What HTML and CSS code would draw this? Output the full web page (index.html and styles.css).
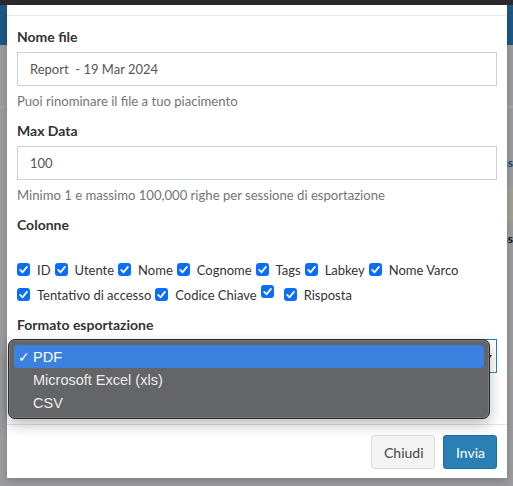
FILE: index.html
```html
<!DOCTYPE html>
<html lang="it">
<head>
<meta charset="utf-8">
<title>Esporta report</title>
<link rel="stylesheet" href="styles.css">
</head>
<body>
  <div class="topbar"></div>
  <div class="appbar"></div>
  <div class="page">
    <div class="page-line"></div>
    <div class="page-row page-row-link"><span>ss</span></div>
    <div class="page-row page-row-warn"></div>
    <div class="page-row page-row-text"><span>ss</span></div>
  </div>

  <div class="backdrop"></div>

  <div class="modal">
    <div class="modal-header"></div>
    <div class="modal-body">
      <label class="field-label">Nome file</label>
      <input class="text-input" type="text" value="Report  - 19 Mar 2024">
      <p class="help">Puoi rinominare il file a tuo piacimento</p>

      <label class="field-label">Max Data</label>
      <input class="text-input" type="text" value="100">
      <p class="help">Minimo 1 e massimo 100,000 righe per sessione di esportazione</p>

      <label class="field-label">Colonne</label>
      <div class="columns">
        <span class="check"><span class="box"><svg viewBox="0 0 13 13"><rect width="13" height="13" rx="3"/><path d="M3.2 6.9 5.6 9.3 9.9 3.9"/></svg></span><span class="check-label">ID</span></span>
        <span class="check"><span class="box"><svg viewBox="0 0 13 13"><rect width="13" height="13" rx="3"/><path d="M3.2 6.9 5.6 9.3 9.9 3.9"/></svg></span><span class="check-label">Utente</span></span>
        <span class="check"><span class="box"><svg viewBox="0 0 13 13"><rect width="13" height="13" rx="3"/><path d="M3.2 6.9 5.6 9.3 9.9 3.9"/></svg></span><span class="check-label">Nome</span></span>
        <span class="check"><span class="box"><svg viewBox="0 0 13 13"><rect width="13" height="13" rx="3"/><path d="M3.2 6.9 5.6 9.3 9.9 3.9"/></svg></span><span class="check-label">Cognome</span></span>
        <span class="check"><span class="box"><svg viewBox="0 0 13 13"><rect width="13" height="13" rx="3"/><path d="M3.2 6.9 5.6 9.3 9.9 3.9"/></svg></span><span class="check-label">Tags</span></span>
        <span class="check"><span class="box"><svg viewBox="0 0 13 13"><rect width="13" height="13" rx="3"/><path d="M3.2 6.9 5.6 9.3 9.9 3.9"/></svg></span><span class="check-label">Labkey</span></span>
        <span class="check"><span class="box"><svg viewBox="0 0 13 13"><rect width="13" height="13" rx="3"/><path d="M3.2 6.9 5.6 9.3 9.9 3.9"/></svg></span><span class="check-label">Nome Varco</span></span>
        <span class="check"><span class="box"><svg viewBox="0 0 13 13"><rect width="13" height="13" rx="3"/><path d="M3.2 6.9 5.6 9.3 9.9 3.9"/></svg></span><span class="check-label">Tentativo di accesso</span></span>
        <span class="check"><span class="box"><svg viewBox="0 0 13 13"><rect width="13" height="13" rx="3"/><path d="M3.2 6.9 5.6 9.3 9.9 3.9"/></svg></span><span class="check-label">Codice Chiave</span></span>
        <span class="check check-bare"><span class="box"><svg viewBox="0 0 13 13"><rect width="13" height="13" rx="3"/><path d="M3.2 6.9 5.6 9.3 9.9 3.9"/></svg></span><span class="check-label"></span></span>
        <span class="check"><span class="box"><svg viewBox="0 0 13 13"><rect width="13" height="13" rx="3"/><path d="M3.2 6.9 5.6 9.3 9.9 3.9"/></svg></span><span class="check-label">Risposta</span></span>
      </div>

      <label class="field-label field-label-format">Formato esportazione</label>
      <div class="select-wrap">
        <div class="select"><span class="caret"></span></div>
        <ul class="menu">
          <li class="menu-item is-active"><span class="tick">✓</span>PDF</li>
          <li class="menu-item">Microsoft Excel (xls)</li>
          <li class="menu-item">CSV</li>
        </ul>
      </div>
    </div>
    <div class="modal-footer">
      <button class="btn btn-default" type="button">Chiudi</button>
      <button class="btn btn-primary" type="button">Invia</button>
    </div>
  </div>
</body>
</html>
```

FILE: styles.css
```css
* {
  box-sizing: border-box;
}

html,
body {
  margin: 0;
}

body {
  position: relative;
  width: 513px;
  height: 486px;
  overflow: hidden;
  background: #f1f2f4;
  font-family: Lato, "Liberation Sans", sans-serif;
}

/* underlying application page */
.topbar {
  position: relative;
  z-index: 2;
  height: 5px;
  background: #2b2b2b;
}

.appbar {
  height: 40px;
  background: #2f87cf;
}

.page {
  display: flex;
  flex-direction: column;
  align-items: flex-end;
}

.page-line {
  width: 100%;
  height: 63px;
  border-bottom: 2px solid #fff;
}

.page-row {
  display: flex;
  justify-content: flex-end;
  width: 30px;
  font-size: 12px;
  font-weight: 700;
  white-space: nowrap;
}

.page-row-link {
  height: 78px;
  align-items: center;
  padding-top: 30px;
  color: #1f6fa8;
}

.page-row-warn {
  height: 36px;
  background: #fcf8e3;
}

.page-row-text {
  height: 32px;
  align-items: center;
  color: #222;
}

.backdrop {
  position: absolute;
  inset: 5px 0 0 0;
  background: rgba(0, 0, 0, 0.35);
}

/* dialog */
.modal {
  position: absolute;
  left: 7px;
  top: 5px;
  z-index: 3;
  display: flex;
  flex-direction: column;
  width: 500px;
  height: 473px;
  background: #fff;
  box-shadow: 0 3px 9px rgba(0, 0, 0, 0.2);
  color: #333;
}

.modal-header {
  height: 11px;
  border-bottom: 1px solid #e9eaec;
}

.modal-body {
  flex: 1;
  padding: 11px 10px 0;
}

.field-label {
  display: block;
  margin-bottom: 5px;
  font-size: 14px;
  font-weight: 700;
  line-height: 20px;
  color: #333;
}

.text-input {
  display: block;
  width: 100%;
  height: 34px;
  margin: 0;
  padding: 0 12px;
  border: 1px solid #ccd0d8;
  border-radius: 0;
  background: #fff;
  font-family: Lato, "Liberation Sans", sans-serif;
  font-size: 13px;
  color: #555;
  outline: none;
}

.help {
  margin: 5px 0 10px;
  font-size: 13.1px;
  line-height: 20px;
  color: #747474;
}

/* column checkboxes */
.columns {
  display: flex;
  flex-wrap: wrap;
  margin-top: 22px;
  font-size: 13px;
  color: #333;
}

.check {
  display: flex;
  align-items: center;
  height: 25px;
}

.box {
  display: block;
  width: 13px;
  height: 13px;
}

.box svg {
  display: block;
  width: 13px;
  height: 13px;
}

.box rect {
  fill: #0b6ef6;
}

.box path {
  fill: none;
  stroke: #fff;
  stroke-width: 1.8;
  stroke-linecap: round;
  stroke-linejoin: round;
}

.check-label {
  margin-left: 7px;
  margin-right: 4px;
  line-height: 20px;
}

.check-bare {
  align-items: flex-start;
  padding-top: 3px;
}

.check-bare .check-label {
  margin-left: 0;
  margin-right: 10px;
}

.field-label-format {
  margin-top: 8px;
  margin-bottom: 4px;
}

/* export format select with its open list */
.select-wrap {
  position: relative;
}

.select {
  position: relative;
  height: 34px;
  border: 1px solid #2e7db8;
}

.caret {
  position: absolute;
  right: 4px;
  top: 15px;
  border-left: 2.5px solid transparent;
  border-right: 2.5px solid transparent;
  border-top: 3px solid #333;
}

.menu {
  position: absolute;
  left: -9px;
  top: 0;
  width: 482px;
  height: 80px;
  margin: 0;
  padding: 5px;
  list-style: none;
  background: #646567;
  border: 1px solid #2c2c2d;
  border-radius: 7px;
  box-shadow: inset 0 0 0 1px #77787a, 0 6px 14px rgba(0, 0, 0, 0.25);
  font-family: "Liberation Sans", Arial, sans-serif;
  font-size: 14.5px;
  color: #ececec;
}

.menu-item {
  position: relative;
  height: 23px;
  padding-left: 19px;
  border-radius: 4px;
  line-height: 25px;
}

.menu-item.is-active {
  background: #3b82e0;
  color: #fff;
}

.tick {
  position: absolute;
  left: 4px;
  top: 0;
  font-family: "DejaVu Sans", sans-serif;
  font-size: 14px;
  font-weight: 700;
}

/* footer */
.modal-footer {
  display: flex;
  justify-content: flex-end;
  gap: 8px;
  height: 54px;
  padding: 10px 10px 9px;
  border-top: 1px solid #e5e5e5;
}

.btn {
  height: 34px;
  padding: 0 12px;
  border-radius: 3px;
  font-family: Lato, "Liberation Sans", sans-serif;
  font-size: 14px;
  cursor: pointer;
}

.btn-default {
  width: 64px;
  border: 1px solid #dcdcdc;
  background: #f4f4f4;
  color: #444;
}

.btn-primary {
  width: 54px;
  border: 1px solid #226d9e;
  background: #2a7fb5;
  color: #fff;
}
```
